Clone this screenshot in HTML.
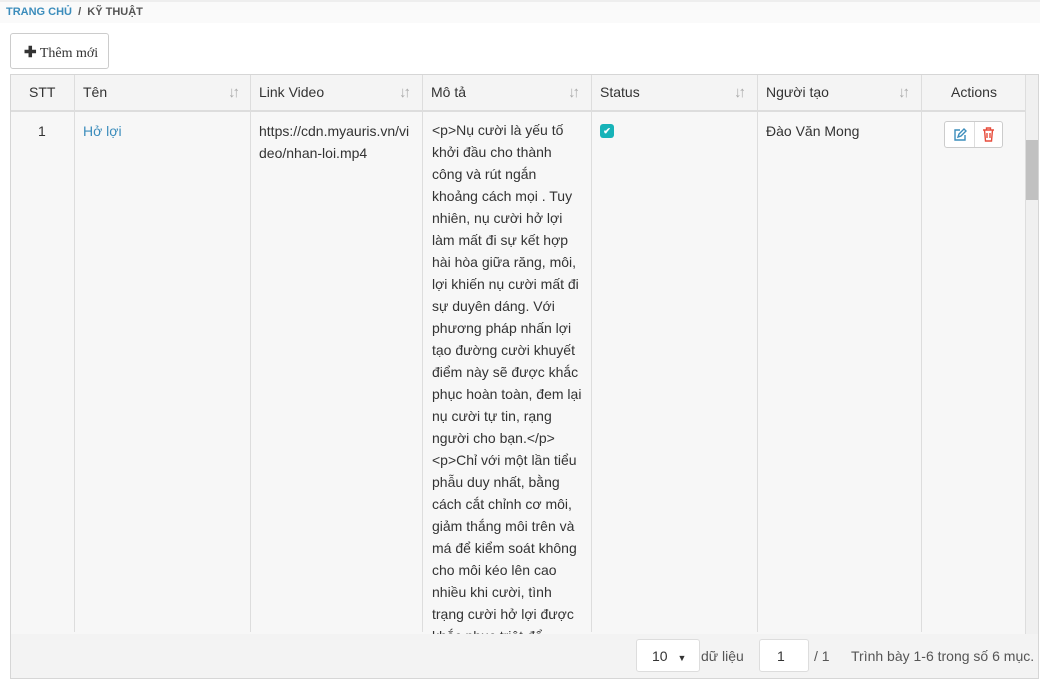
<!DOCTYPE html>
<html><head><meta charset="utf-8"><style>
*{box-sizing:border-box;margin:0;padding:0}
body{width:1040px;height:679px;overflow:hidden;background:#fff;font-family:"Liberation Sans",Arial,sans-serif;font-size:14px;color:#333;position:relative}
.top{position:absolute;left:0;top:0;width:1040px;height:23px;background:#fafafa;border-top:2px solid #eee}
.bc{position:absolute;left:6px;top:4px;font-size:11px;font-weight:bold;color:#555}
.bc span{color:#3c8dbc}
.btn{position:absolute;left:10px;top:33px;width:99px;height:36px;border:1px solid #ccc;border-radius:3px;background:#fff;font-family:"Liberation Serif",serif;font-size:14px;color:#333;padding:9px 0 0 13px}
.wrap{position:absolute;left:10px;top:74px;width:1029px;height:605px;border:1px solid #d6d6d6;background:#f7f7f7;overflow:hidden}
.col{position:absolute;top:0;bottom:46px;border-right:1px solid #ddd}
.hd{position:absolute;left:0;top:0;width:1015px;height:37px;background:#f4f4f4;border-bottom:2px solid #ddd}
.h{position:absolute;top:9px;font-size:14px;color:#333}
.ar{position:absolute;top:9px;color:#aaa;font-size:15px;letter-spacing:-3px}
.c{position:absolute;top:45px;font-size:14px;line-height:22px;color:#333}
.sb{position:absolute;left:1014px;top:0;width:14px;height:559px;background:#f0f0f0;border-left:1px solid #ddd}
.th{position:absolute;left:1015px;top:65px;width:13px;height:60px;background:#c1c1c1}
.ft{position:absolute;left:0;top:559px;width:1029px;height:46px;background:#f3f3f3}
.box{position:absolute;background:#fff;border:1px solid #ddd;border-radius:3px;height:33px;top:5px;font-size:14px;padding-top:8px}
</style></head><body>
<div class="top"><div class="bc"><span>TRANG CHỦ</span>&nbsp; / &nbsp;KỸ THUẬT</div></div>
<div class="btn"><b style="font-family:'Liberation Sans';font-size:15px">✚</b> Thêm mới</div>
<div class="wrap">
<div class="hd"></div>
<div class="col" style="left:0;width:64px"></div>
<div class="col" style="left:64px;width:176px"></div>
<div class="col" style="left:240px;width:172px"></div>
<div class="col" style="left:412px;width:169px"></div>
<div class="col" style="left:581px;width:166px"></div>
<div class="col" style="left:747px;width:164px"></div>
<div class="col" style="left:911px;width:104px"></div>
<div class="h" style="left:18px">STT</div>
<div class="h" style="left:72px">Tên</div><div class="ar" style="left:217px">↓↑</div>
<div class="h" style="left:248px">Link Video</div><div class="ar" style="left:388px">↓↑</div>
<div class="h" style="left:420px">Mô tả</div><div class="ar" style="left:557px">↓↑</div>
<div class="h" style="left:589px">Status</div><div class="ar" style="left:723px">↓↑</div>
<div class="h" style="left:755px">Người tạo</div><div class="ar" style="left:887px">↓↑</div>
<div class="h" style="left:911px;width:104px;text-align:center">Actions</div>
<div class="c" style="left:27px">1</div>
<div class="c" style="left:72px;color:#3c8dbc">Hở lợi</div>
<div class="c" style="left:248px">https://cdn.myauris.vn/vi<br>deo/nhan-loi.mp4</div>
<div class="c" style="left:421px;top:44px">&lt;p&gt;Nụ cười là yếu tố<br>khởi đầu cho thành<br>công và rút ngắn<br>khoảng cách mọi . Tuy<br>nhiên, nụ cười hở lợi<br>làm mất đi sự kết hợp<br>hài hòa giữa răng, môi,<br>lợi khiến nụ cười mất đi<br>sự duyên dáng. Với<br>phương pháp nhấn lợi<br>tạo đường cười khuyết<br>điểm này sẽ được khắc<br>phục hoàn toàn, đem lại<br>nụ cười tự tin, rạng<br>người cho bạn.&lt;/p&gt;<br>&lt;p&gt;Chỉ với một lần tiểu<br>phẫu duy nhất, bằng<br>cách cắt chỉnh cơ môi,<br>giảm thắng môi trên và<br>má để kiểm soát không<br>cho môi kéo lên cao<br>nhiều khi cười, tình<br>trạng cười hở lợi được<br>khắc phục triệt để.</div>
<div style="position:absolute;left:589px;top:49px;width:14px;height:14px;border-radius:3px;background:#17b3b8;color:#fff;font-size:9px;text-align:center;line-height:14px;font-weight:bold">✔</div>
<div class="c" style="left:755px">Đào Văn Mong</div>
<div style="position:absolute;left:933px;top:46px;width:59px;height:27px;border:1px solid #ccc;border-radius:3px;background:#fff">
<div style="position:absolute;left:29px;top:0;width:1px;height:25px;background:#ddd"></div>
<svg style="position:absolute;left:8px;top:6px" width="14" height="14" viewBox="0 0 14 14" fill="none" stroke="#3c8dbc" stroke-width="1.4"><path d="M7 2H2v10h10V7"/><path d="M5 9l1-3 5-5 2 2-5 5z"/></svg>
<svg style="position:absolute;left:37px;top:5px" width="13" height="15" viewBox="0 0 13 15" fill="none" stroke="#e74c3c" stroke-width="1.4"><path d="M1 3h11M4.5 3V1h4v2M2.5 3l1 11h6l1-11M5 6v5M8 6v5"/></svg>
</div>
<div class="sb"></div><div class="th"></div>
<div class="ft">
<div class="box" style="left:625px;width:64px;padding-left:15px">10 <span style="font-size:9px;margin-left:6px">▼</span></div>
<div style="position:absolute;left:690px;top:14px;color:#555">dữ liệu</div>
<div class="box" style="left:748px;width:50px;padding-left:17px">1</div>
<div style="position:absolute;left:803px;top:14px;color:#555">/ 1</div>
<div style="position:absolute;left:840px;top:14px;color:#555">Trình bày 1-6 trong số 6 mục.</div>
</div>
</div>
</body></html>
